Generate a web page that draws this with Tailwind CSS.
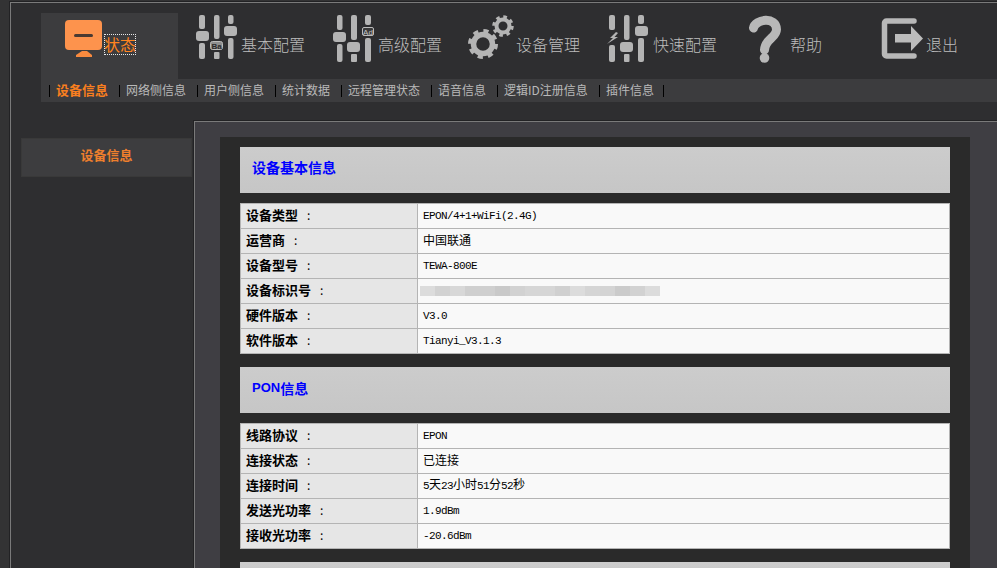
<!DOCTYPE html>
<html lang="zh">
<head>
<meta charset="utf-8">
<title>状态</title>
<script src="https://cdn.jsdelivr.net/npm/@tailwindcss/browser@4"></script>
</head>
<body class="bg-[#333334]">
<div class="h-[568px] w-[997px] overflow-hidden pt-[1px] pl-[9px] font-['Noto_Sans_CJK_SC',sans-serif]">
<div class="h-[600px] border-l border-t border-[#222224]">
<div class="h-[600px] border-l border-t border-[#7a7a7a] bg-[#2e2e30]">

<nav class="flex pl-[30px] pt-[10px]">
  <a class="flex h-[66px] w-[137px] items-center bg-[#3c3c3e]">
    <svg class="shrink-0" width="63" height="66" viewBox="41 13 63 66">
      <rect x="65" y="20" width="37" height="30" rx="4" fill="#fd934d"/>
      <rect x="74" y="34" width="19" height="3" rx="1.5" fill="#4a3a32"/>
      <path d="M82 51H87L92 55V57H76V55Z" fill="#f98a3e"/>
    </svg>
    <span class="mb-[4px] text-[16px] font-normal leading-[21px] text-[#ff8420] outline-1 outline-dotted outline-offset-[-1px] outline-[#e8e8e8]">状态</span>
  </a>
  <a class="flex h-[66px] w-[137px] items-center">
    <svg class="shrink-0" width="63" height="66" viewBox="178 13 63 66">
      <g fill="#b4b4b4">
        <rect x="199" y="15" width="6" height="14" rx="2"/><rect x="199" y="43" width="6" height="16" rx="2"/>
        <rect x="196" y="31" width="13" height="10" rx="3"/>
        <rect x="214" y="15" width="5.500" height="24" rx="2"/><rect x="214" y="52" width="5.500" height="7" rx="1"/>
        <rect x="228" y="15" width="5.500" height="9" rx="2"/><rect x="228" y="38" width="5.500" height="21" rx="2"/>
        <rect x="224" y="26" width="13" height="10" rx="3"/>
      </g>
      <rect x="210.500" y="41.500" width="12" height="8" rx="2" fill="#8e8e8e" stroke="#bbb"/>
      <text x="216.500" y="48.500" text-anchor="middle" font-size="8" font-weight="700" fill="#2a2a2a" font-family="Liberation Sans">Ba</text>
    </svg>
    <span class="mb-[4px] text-[16px] font-light leading-[21px] text-[#bdbdbd]">基本配置</span>
  </a>
  <a class="flex h-[66px] w-[137px] items-center">
    <svg class="shrink-0" width="63" height="66" viewBox="315 13 63 66">
      <g fill="#b4b4b4">
        <rect x="337" y="15" width="5.500" height="15" rx="2"/><rect x="337" y="44" width="5.500" height="18" rx="2"/>
        <rect x="333" y="32" width="13" height="10" rx="3"/>
        <rect x="351" y="15" width="6" height="25" rx="2"/><rect x="351" y="54" width="6" height="8" rx="1"/>
        <rect x="347" y="42" width="13" height="10" rx="3"/>
        <rect x="365" y="15" width="6" height="10" rx="2"/><rect x="365" y="38" width="6" height="24" rx="2"/>
      </g>
      <rect x="362.500" y="27.500" width="11" height="8" rx="1.500" fill="#3a3a3a" stroke="#bbb"/>
      <text x="368" y="34.500" text-anchor="middle" font-size="8" fill="#c4c4c4" font-family="Liberation Sans">Ad</text>
    </svg>
    <span class="mb-[4px] text-[16px] font-light leading-[21px] text-[#bdbdbd]">高级配置</span>
  </a>
  <a class="flex h-[66px] w-[137px] items-center">
    <svg class="shrink-0" width="64" height="66" viewBox="452 13 64 66">
      <g fill="none" stroke="#b4b4b4">
        <circle cx="483" cy="44" r="9.500" stroke-width="5.500"/>
        <circle cx="483" cy="44" r="13" stroke-width="4" stroke-dasharray="5.100 5.110"/>
        <circle cx="503" cy="26" r="6.500" stroke-width="4"/>
        <circle cx="503" cy="26" r="9" stroke-width="3.500" stroke-dasharray="3.530 3.540"/>
      </g>
    </svg>
    <span class="mb-[4px] text-[16px] font-light leading-[21px] text-[#bdbdbd]">设备管理</span>
  </a>
  <a class="flex h-[66px] w-[137px] items-center">
    <svg class="shrink-0" width="64" height="66" viewBox="589 13 64 66">
      <g fill="#b4b4b4">
        <rect x="609" y="15" width="6" height="15" rx="2"/><rect x="609" y="45" width="6" height="17" rx="2"/>
        <path d="M616 32 610 38H613L607 44 618 37H614.500L618 33Z"/>
        <rect x="624" y="15" width="5.500" height="25" rx="2"/><rect x="624" y="54" width="5.500" height="8" rx="1"/>
        <rect x="620" y="42" width="13" height="10" rx="3"/>
        <rect x="638" y="15" width="6" height="9" rx="2"/><rect x="638" y="38" width="6" height="24" rx="2"/>
        <rect x="635" y="26" width="13" height="10" rx="3"/>
      </g>
    </svg>
    <span class="mb-[4px] text-[16px] font-light leading-[21px] text-[#bdbdbd]">快速配置</span>
  </a>
  <a class="flex h-[66px] w-[137px] items-center">
    <svg class="shrink-0" width="64" height="66" viewBox="726 13 64 66">
      <path d="M753.500 28C755 19 776.500 16 776.500 29.500C776.500 38 765 38.500 764.500 50" fill="none" stroke="#b8b8b8" stroke-width="9" stroke-linecap="round"/>
      <circle cx="764.500" cy="58" r="4.800" fill="#b8b8b8"/>
    </svg>
    <span class="mb-[4px] text-[16px] font-light leading-[21px] text-[#bdbdbd]">帮助</span>
  </a>
  <a class="flex h-[66px] w-[134px] items-center">
    <svg class="shrink-0" width="63" height="66" viewBox="863 13 63 66">
      <path d="M914 21H886.500a2 2 0 0 0-2 2V54a2 2 0 0 0 2 2H914" fill="none" stroke="#b8b8b8" stroke-width="5.500" stroke-linecap="round" stroke-linejoin="round"/>
      <path d="M895 34H911V26L923 38.500 911 51V42.500H895Z" fill="#bcbcbc"/>
    </svg>
    <span class="mb-[4px] text-[16px] font-light leading-[21px] text-[#bdbdbd]">退出</span>
  </a>
</nav>

<div class="ml-[30px] flex h-[23px] items-center bg-[#3c3c3e] pl-[8px] text-[12px] text-[#b9b9b9]">
  <span class="h-[12px] border-l border-black"></span><a class="pb-[2px] pl-[6px] pr-[11px] text-[13px] font-bold text-[#f97f1f]">设备信息</a>
  <span class="h-[12px] border-l border-black"></span><a class="pb-[2px] pl-[6px] pr-[11px]">网络侧信息</a>
  <span class="h-[12px] border-l border-black"></span><a class="pb-[2px] pl-[6px] pr-[11px]">用户侧信息</a>
  <span class="h-[12px] border-l border-black"></span><a class="pb-[2px] pl-[6px] pr-[11px]">统计数据</a>
  <span class="h-[12px] border-l border-black"></span><a class="pb-[2px] pl-[6px] pr-[11px]">远程管理状态</a>
  <span class="h-[12px] border-l border-black"></span><a class="pb-[2px] pl-[6px] pr-[11px]">语音信息</a>
  <span class="h-[12px] border-l border-black"></span><a class="pb-[2px] pl-[6px] pr-[11px]">逻辑ID注册信息</a>
  <span class="h-[12px] border-l border-black"></span><a class="pb-[2px] pl-[6px] pr-[9px]">插件信息</a>
  <span class="h-[12px] border-l border-black"></span>
</div>

<div class="flex pt-[18px] pl-[10px]">
  <aside class="mr-[1px] mt-[18px] w-[171px] shrink-0">
    <div class="flex h-[39px] items-center justify-center border border-[#393939] bg-[#3d3d3f] pb-[5px] text-[13px] font-bold text-[#ee7f2d]">设备信息</div>
  </aside>
  <div class="flex-1 border-l border-t border-[#222224]">
    <main class="h-[600px] border-l border-t border-[#7a7a7a] bg-[#3f3e43] pl-[25px] pt-[15px]">
      <div class="h-[600px] w-[750px] bg-[#2a2a2a] px-[20px] pt-[10px]">

        <h2 class="flex h-[46px] items-center bg-gradient-to-b from-[#cccccc] to-[#c6c6c6] pb-[5px] pl-[12px] text-[14px] font-bold text-[#0000ff]">设备基本信息</h2>
        <table class="mt-[10px] w-[710px] table-fixed border-collapse text-[12px] text-black">
          <colgroup><col class="w-[177px]"><col></colgroup>
          <tbody>
            <tr class="h-[25px]"><th class="border border-[#b4b4b4] bg-[#e6e6e6] pb-[2px] pl-[5px] text-left text-[13px] font-bold">设备类型<span class="ml-[9px] text-[12px] font-normal">:</span></th><td class="border border-[#b4b4b4] bg-[#f9f9f9] pl-[5px] font-['Liberation_Mono',monospace] text-[11px] tracking-[-0.6px]">EPON/4+1+WiFi(2.4G)</td></tr>
            <tr class="h-[25px]"><th class="border border-[#b4b4b4] bg-[#e6e6e6] pb-[2px] pl-[5px] text-left text-[13px] font-bold">运营商<span class="ml-[9px] text-[12px] font-normal">:</span></th><td class="border border-[#b4b4b4] bg-[#f9f9f9] pb-[2px] pl-[5px]">中国联通</td></tr>
            <tr class="h-[25px]"><th class="border border-[#b4b4b4] bg-[#e6e6e6] pb-[2px] pl-[5px] text-left text-[13px] font-bold">设备型号<span class="ml-[9px] text-[12px] font-normal">:</span></th><td class="border border-[#b4b4b4] bg-[#f9f9f9] pl-[5px] font-['Liberation_Mono',monospace] text-[11px] tracking-[-0.6px]">TEWA-800E</td></tr>
            <tr class="h-[25px]"><th class="border border-[#b4b4b4] bg-[#e6e6e6] pb-[2px] pl-[5px] text-left text-[13px] font-bold">设备标识号<span class="ml-[9px] text-[12px] font-normal">:</span></th><td class="border border-[#b4b4b4] bg-[#f9f9f9] pl-[2px]">
              <div class="flex h-[10px] w-[240px]">
                <span class="w-[15px] bg-[#dcdcdc]"></span><span class="w-[15px] bg-[#d2d2d2]"></span><span class="w-[15px] bg-[#d8d8d8]"></span><span class="w-[15px] bg-[#cfcfcf]"></span><span class="w-[15px] bg-[#cfcfcf]"></span><span class="w-[15px] bg-[#c9c9c9]"></span><span class="w-[15px] bg-[#d2d2d2]"></span><span class="w-[15px] bg-[#d6d6d6]"></span><span class="w-[15px] bg-[#d6d6d6]"></span><span class="w-[15px] bg-[#d0d0d0]"></span><span class="w-[15px] bg-[#dcdcdc]"></span><span class="w-[15px] bg-[#d5d5d5]"></span><span class="w-[15px] bg-[#d4d4d4]"></span><span class="w-[15px] bg-[#cbcbcb]"></span><span class="w-[15px] bg-[#d2d2d2]"></span><span class="w-[15px] bg-[#dcdcdc]"></span>
              </div>
            </td></tr>
            <tr class="h-[25px]"><th class="border border-[#b4b4b4] bg-[#e6e6e6] pb-[2px] pl-[5px] text-left text-[13px] font-bold">硬件版本<span class="ml-[9px] text-[12px] font-normal">:</span></th><td class="border border-[#b4b4b4] bg-[#f9f9f9] pl-[5px] font-['Liberation_Mono',monospace] text-[11px] tracking-[-0.6px]">V3.0</td></tr>
            <tr class="h-[25px]"><th class="border border-[#b4b4b4] bg-[#e6e6e6] pb-[2px] pl-[5px] text-left text-[13px] font-bold">软件版本<span class="ml-[9px] text-[12px] font-normal">:</span></th><td class="border border-[#b4b4b4] bg-[#f9f9f9] pl-[5px] font-['Liberation_Mono',monospace] text-[11px] tracking-[-0.6px]">Tianyi_V3.1.3</td></tr>
          </tbody>
        </table>

        <h2 class="mt-[13px] flex h-[46px] items-center bg-gradient-to-b from-[#cccccc] to-[#c6c6c6] pb-[4px] pl-[12px] text-[14px] font-bold text-[#0000ff]"><span class="font-['Liberation_Sans',sans-serif] text-[13px] font-bold">PON</span>信息</h2>
        <table class="mt-[10px] w-[710px] table-fixed border-collapse text-[12px] text-black">
          <colgroup><col class="w-[177px]"><col></colgroup>
          <tbody>
            <tr class="h-[25px]"><th class="border border-[#b4b4b4] bg-[#e6e6e6] pb-[2px] pl-[5px] text-left text-[13px] font-bold">线路协议<span class="ml-[9px] text-[12px] font-normal">:</span></th><td class="border border-[#b4b4b4] bg-[#f9f9f9] pl-[5px] font-['Liberation_Mono',monospace] text-[11px] tracking-[-0.6px]">EPON</td></tr>
            <tr class="h-[25px]"><th class="border border-[#b4b4b4] bg-[#e6e6e6] pb-[2px] pl-[5px] text-left text-[13px] font-bold">连接状态<span class="ml-[9px] text-[12px] font-normal">:</span></th><td class="border border-[#b4b4b4] bg-[#f9f9f9] pb-[2px] pl-[5px]">已连接</td></tr>
            <tr class="h-[25px]"><th class="border border-[#b4b4b4] bg-[#e6e6e6] pb-[2px] pl-[5px] text-left text-[13px] font-bold">连接时间<span class="ml-[9px] text-[12px] font-normal">:</span></th><td class="border border-[#b4b4b4] bg-[#f9f9f9] pb-[2px] pl-[5px]"><span class="font-['Liberation_Mono',monospace] text-[11px] tracking-[-0.6px]">5</span>天<span class="font-['Liberation_Mono',monospace] text-[11px] tracking-[-0.6px]">23</span>小时<span class="font-['Liberation_Mono',monospace] text-[11px] tracking-[-0.6px]">51</span>分<span class="font-['Liberation_Mono',monospace] text-[11px] tracking-[-0.6px]">52</span>秒</td></tr>
            <tr class="h-[25px]"><th class="border border-[#b4b4b4] bg-[#e6e6e6] pb-[2px] pl-[5px] text-left text-[13px] font-bold">发送光功率<span class="ml-[9px] text-[12px] font-normal">:</span></th><td class="border border-[#b4b4b4] bg-[#f9f9f9] pl-[5px] font-['Liberation_Mono',monospace] text-[11px] tracking-[-0.6px]">1.9dBm</td></tr>
            <tr class="h-[25px]"><th class="border border-[#b4b4b4] bg-[#e6e6e6] pb-[2px] pl-[5px] text-left text-[13px] font-bold">接收光功率<span class="ml-[9px] text-[12px] font-normal">:</span></th><td class="border border-[#b4b4b4] bg-[#f9f9f9] pl-[5px] font-['Liberation_Mono',monospace] text-[11px] tracking-[-0.6px]">-20.6dBm</td></tr>
          </tbody>
        </table>

        <div class="mt-[13px] h-[46px] bg-gradient-to-b from-[#cccccc] to-[#c6c6c6]"></div>
      </div>
    </main>
  </div>
</div>

</div>
</div>
</div>
</body>
</html>
